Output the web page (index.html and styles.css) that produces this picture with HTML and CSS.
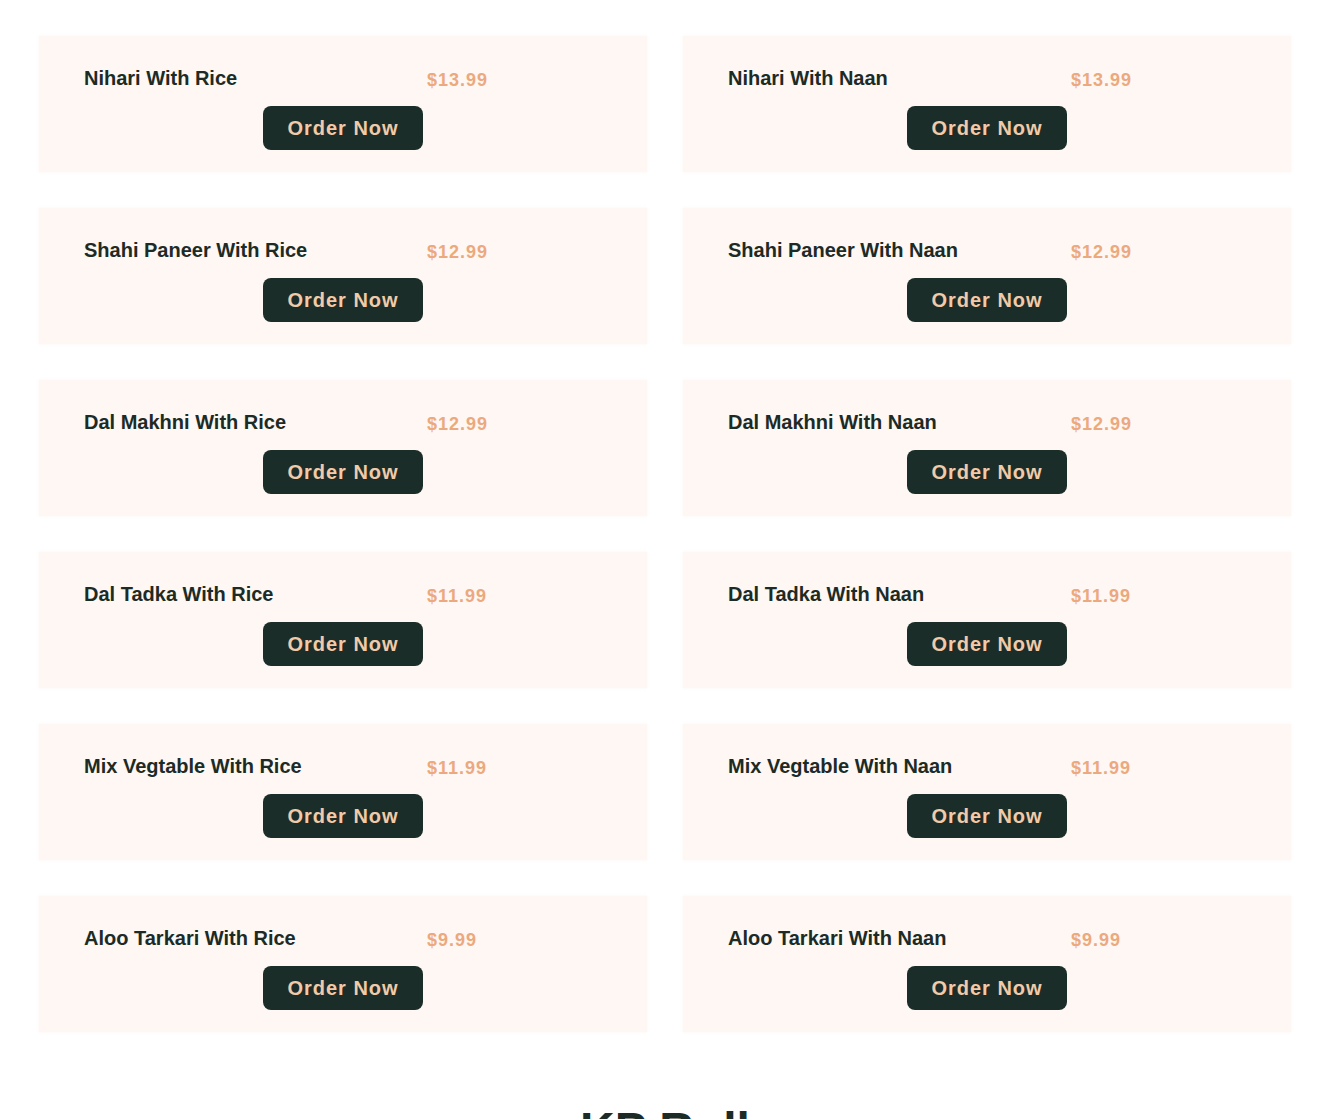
FILE: index.html
```html
<!DOCTYPE html>
<html lang="en">

<head>
  <meta http-equiv="Content-Type" content="text/html;charset=UTF-8" />
  <meta name="viewport" content="width=device-width, initial-scale=1.0" />
  <title>Menu</title>
  <link rel="stylesheet" href="styles.css">
</head>

<body>
  <main>
    <section class="menu-grid">
      <div class="menu-item">
        <div class="item-row">
          <h3>Nihari With Rice</h3>
          <span class="price">$13.99</span>
        </div>
        <button>Order Now</button>
      </div>
      <div class="menu-item">
        <div class="item-row">
          <h3>Nihari With Naan</h3>
          <span class="price">$13.99</span>
        </div>
        <button>Order Now</button>
      </div>

      <div class="menu-item">
        <div class="item-row">
          <h3>Shahi Paneer With Rice</h3>
          <span class="price">$12.99</span>
        </div>
        <button>Order Now</button>
      </div>
      <div class="menu-item">
        <div class="item-row">
          <h3>Shahi Paneer With Naan</h3>
          <span class="price">$12.99</span>
        </div>
        <button>Order Now</button>
      </div>

      <div class="menu-item">
        <div class="item-row">
          <h3>Dal Makhni With Rice</h3>
          <span class="price">$12.99</span>
        </div>
        <button>Order Now</button>
      </div>
      <div class="menu-item">
        <div class="item-row">
          <h3>Dal Makhni With Naan</h3>
          <span class="price">$12.99</span>
        </div>
        <button>Order Now</button>
      </div>

      <div class="menu-item">
        <div class="item-row">
          <h3>Dal Tadka With Rice</h3>
          <span class="price">$11.99</span>
        </div>
        <button>Order Now</button>
      </div>
      <div class="menu-item">
        <div class="item-row">
          <h3>Dal Tadka With Naan</h3>
          <span class="price">$11.99</span>
        </div>
        <button>Order Now</button>
      </div>

      <div class="menu-item">
        <div class="item-row">
          <h3>Mix Vegtable With Rice</h3>
          <span class="price">$11.99</span>
        </div>
        <button>Order Now</button>
      </div>
      <div class="menu-item">
        <div class="item-row">
          <h3>Mix Vegtable With Naan</h3>
          <span class="price">$11.99</span>
        </div>
        <button>Order Now</button>
      </div>

      <div class="menu-item">
        <div class="item-row">
          <h3>Aloo Tarkari With Rice</h3>
          <span class="price">$9.99</span>
        </div>
        <button>Order Now</button>
      </div>
      <div class="menu-item">
        <div class="item-row">
          <h3>Aloo Tarkari With Naan</h3>
          <span class="price">$9.99</span>
        </div>
        <button>Order Now</button>
      </div>
    </section>

    <h2 class="section-title">KP Roll</h2>
  </main>
</body>

</html>
```

FILE: styles.css
```css
* {
  font-family: "Liberation Sans", Arial, sans-serif;
  box-sizing: border-box;
}

body {
  margin: 0;
  padding: 0;
  background-color: #fff;
  color: #1c2b26;
}

main {
  padding: 36px 39px 0 39px;
}

/* Menu list */
.menu-grid {
  display: grid;
  grid-template-columns: 1fr 1fr;
  column-gap: 36px;
  row-gap: 36px;
}

.menu-item {
  background: #fef7f3;
  padding: 31px 45px 22px 45px;
  display: flex;
  flex-direction: column;
  align-items: center;
  box-shadow: 0 0 2px rgba(250, 235, 225, 0.5);
}

.item-row {
  display: flex;
  align-items: baseline;
  width: 100%;
  margin-bottom: 16px;
}

.item-row h3 {
  margin: 0;
  width: 343px;
  font-size: 20px;
  font-weight: bold;
  line-height: 23px;
  color: #1c2b26;
}

.price {
  font-size: 18px;
  font-weight: bold;
  letter-spacing: 1px;
  color: #eca87e;
  position: relative;
  top: 1px;
}

button {
  padding: 10px 24px;
  width: 160px;
  height: 44px;
  background-color: #1b2d28;
  color: #f2caa8;
  border: none;
  border-radius: 8px;
  font-size: 20px;
  font-weight: bold;
  letter-spacing: 1px;
  line-height: 24px;
  cursor: pointer;
}

.section-title {
  margin: 70px 0 0 0;
  text-align: center;
  font-size: 48px;
  font-weight: bold;
  color: #1c2b26;
}
```
